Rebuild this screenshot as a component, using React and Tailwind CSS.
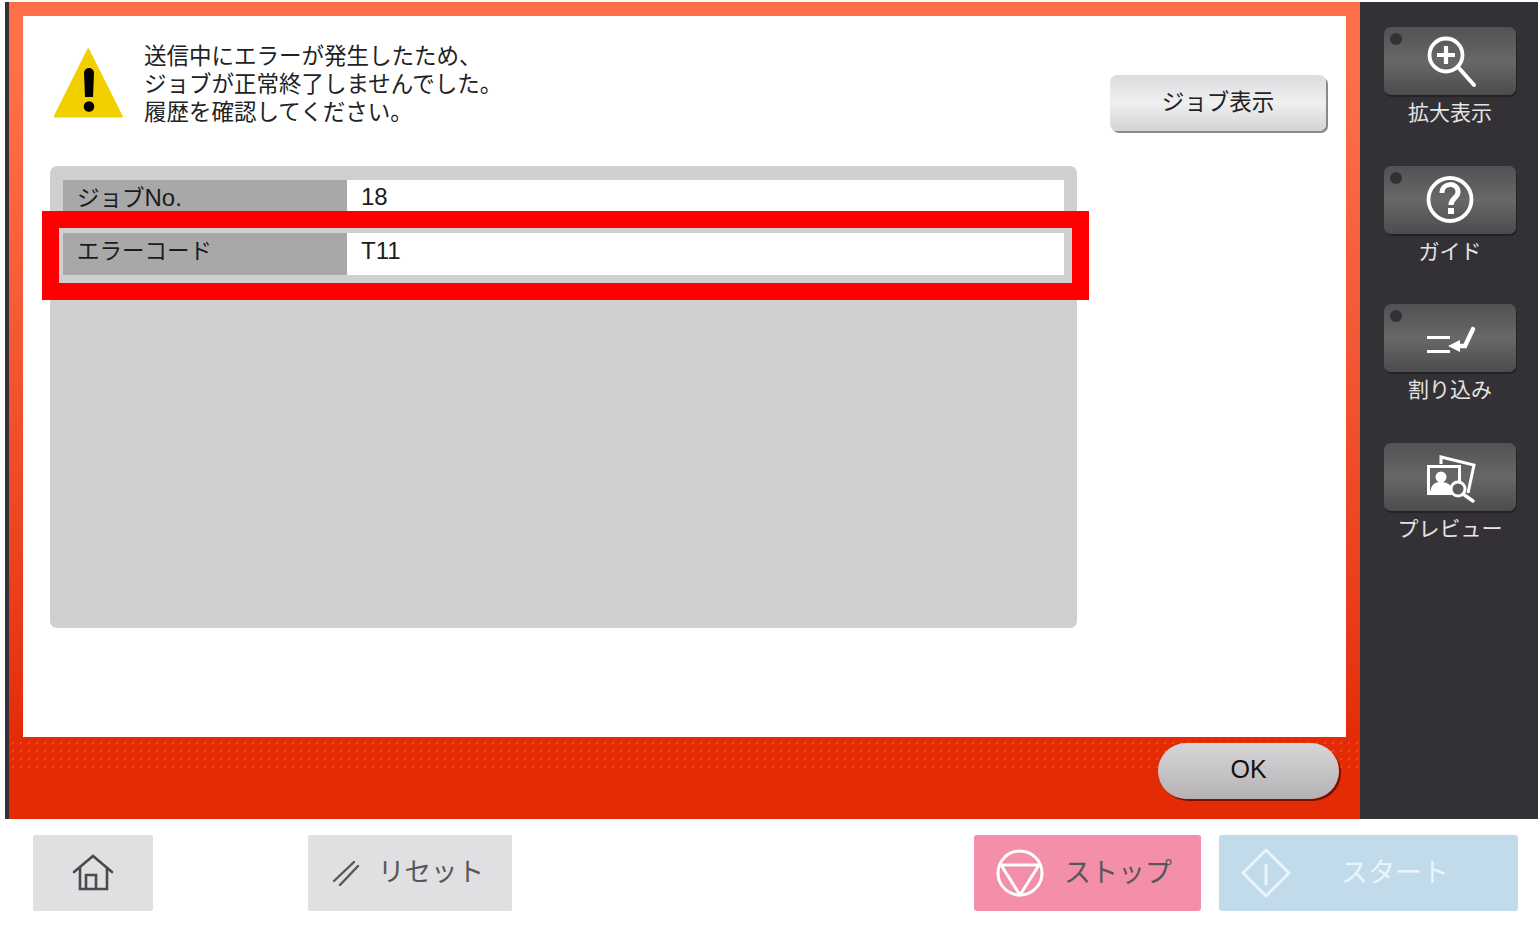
const font = "font-['Liberation_Sans','Noto_Sans_CJK_JP',sans-serif]";

const WarningIcon = () => (
  <svg width="72" height="74" viewBox="0 0 72 74" className="shrink-0">
    <path d="M35.2 2.5 L68.8 69.5 H1.8 Z" fill="#f2d000" stroke="#f2d000" strokeWidth="2" strokeLinejoin="round" />
    <path d="M31 26 a5 5 0 0 1 10 0 L40 50 h-8 Z" fill="#000" />
    <circle cx="36" cy="59.5" r="5.3" fill="#000" />
  </svg>
);

const ZoomIcon = () => (
  <g fill="none" stroke="#fff" strokeWidth="3.8">
    <circle cx="62" cy="28" r="16.5" />
    <path d="M53 28 H71 M62 19 V37" strokeWidth="4.2" />
    <path d="M74 40 L90 58" strokeWidth="4" strokeLinecap="round" />
  </g>
);

const GuideIcon = () => (
  <g>
    <circle cx="66" cy="33.5" r="21.5" fill="none" stroke="#fff" strokeWidth="3.8" />
    <path d="M58 27 c0 -11 16 -11 16 -1 c0 6 -7 6 -7 13" fill="none" stroke="#fff" strokeWidth="5" />
    <rect x="64" y="42" width="6" height="6" fill="#fff" />
  </g>
);

const InterruptIcon = () => (
  <g fill="#fff">
    <rect x="43" y="32" width="23" height="3" />
    <rect x="43" y="46" width="23" height="3" />
    <path d="M64 42 L76 36 V48 Z" />
    <path d="M74 42 H81 L89 25" fill="none" stroke="#fff" strokeWidth="4.4" strokeLinecap="round" />
  </g>
);

const PreviewIcon = () => (
  <g fill="none" stroke="#fff" strokeWidth="3">
    <path d="M57 21 V14 L90 22 L84 50" />
    <rect x="44.5" y="23.5" width="31" height="27" />
    <circle cx="57" cy="34" r="5.5" fill="#fff" stroke="none" />
    <path d="M46 50 C47 41 51 39 57 39 C62 39 66 41 68 45 L68 50 Z" fill="#fff" stroke="none" />
    <circle cx="74" cy="46" r="7" fill="#5c5c5e" />
    <path d="M79 51 L89 58" strokeWidth="3.4" strokeLinecap="round" />
  </g>
);

const sideButtons = [
  { label: '拡大表示', icon: <ZoomIcon />, led: true },
  { label: 'ガイド', icon: <GuideIcon />, led: true },
  { label: '割り込み', icon: <InterruptIcon />, led: true },
  { label: 'プレビュー', icon: <PreviewIcon />, led: false },
];

const SideButton = ({ label, icon, led }) => (
  <div className="flex flex-col items-center h-[138.7px]">
    <div className="relative w-[132px] h-[68px] rounded-[7px] bg-gradient-to-b from-[#525254] via-[#686868] to-[#4c4c4e] shadow-[1px_2px_0_#232225]">
      {led && <span className="absolute left-[6px] top-[6px] w-[12px] h-[12px] rounded-full bg-[#333135]" />}
      <svg width="132" height="68" viewBox="0 0 132 68" className="block">{icon}</svg>
    </div>
    <span className="mt-[3px] text-[21px] leading-[30px] text-[#e4e4e4]">{label}</span>
  </div>
);

const InfoRow = ({ label, value, top }) => (
  <div className="flex h-[42px] text-[#1c1c1c]">
    <div className={`w-[284px] bg-[#a8a8a8] pl-[14px] text-[22.5px] ${top ? 'leading-[35px]' : 'leading-[37px]'}`}>{label}</div>
    <div className={`flex-1 bg-white pl-[14px] text-[24px] ${top ? 'leading-[34px]' : 'leading-[36px]'}`}>{value}</div>
  </div>
);

const App = () => {
  return (
    <div className={`w-[1540px] h-[930px] bg-white overflow-hidden pt-[2px] ${font}`}>
      <div className="flex h-[817px] pl-[5px] pr-[2px]">
        <div className="w-[4px] bg-[#333135]" />

        <div className="relative flex-1 flex flex-col px-[14px] pt-[14px] bg-gradient-to-b from-[#ff7048] from-[8%] to-[#e32b05] to-[91%]">
          <div className="relative z-10 h-[721px] bg-white pl-[27px] pr-[19px] pt-[31px]">
            <div className="flex h-[119px]">
              <div className="w-[75px] ml-[3px]"><WarningIcon /></div>
              <div className="ml-[16px] -mt-[4px] text-[22.5px] leading-[28px] text-[#222]">
                <p>送信中にエラーが発生したため、</p>
                <p>ジョブが正常終了しませんでした。</p>
                <p>履歴を確認してください。</p>
              </div>
              <div className="ml-auto mr-[1px] mt-[28px] w-[216px] h-[56px] rounded-[7px] flex items-center justify-center text-[22.5px] text-[#222] bg-gradient-to-b from-[#dcdcde] via-[#f0f0f2] to-[#d4d4d6] shadow-[2px_2px_0_#8a8a8a]">
                ジョブ表示
              </div>
            </div>

            <div className="relative w-[1027px] h-[462px] rounded-[7px] bg-[#cfcfcf] px-[13px] pt-[14px] flex flex-col gap-[11px]">
              <InfoRow label={<>ジョブ<span className="text-[24px]">No.</span></>} value="18" top />
              <InfoRow label="エラーコード" value="T11" />
              <div className="absolute -left-[8px] top-[45px] w-[1047px] h-[89px] border-[17px] border-[#ff0000]" />
            </div>
          </div>

          <div className="absolute inset-x-0 top-[737px] h-[30px] opacity-60 bg-[radial-gradient(circle,#ff5c12_0.7px,transparent_1.1px)] bg-[length:8px_8px]" />

          <div className="relative flex-1 flex justify-end items-start pt-[6px]">
            <div className="w-[181px] h-[56px] mr-[7px] pb-[2px] rounded-full flex items-center justify-center text-[25px] text-[#111] bg-gradient-to-b from-[#d8d6d8] to-[#b4b2b4] shadow-[2px_2px_0_#7c1000]">
              OK
            </div>
          </div>
        </div>

        <div className="w-[178px] bg-[#333135] pt-[25px] pl-[24px] pr-[22px]">
          {sideButtons.map((b) => (
            <SideButton key={b.label} label={b.label} icon={b.icon} led={b.led} />
          ))}
        </div>
      </div>

      <div className="flex pt-[16px] pl-[33px] pr-[22px]">
        <div className="w-[120px] h-[76px] rounded-[2px] bg-[#e0dfe2]">
          <svg width="120" height="76" viewBox="0 0 120 76" fill="none" stroke="#4a4a4c" strokeWidth="2.6">
            <path d="M41 37 L60 21 L79 37" strokeLinecap="round" />
            <path d="M47 32 V54 H74 V32" />
            <path d="M53 54 V40 H63 V54" />
          </svg>
        </div>

        <div className="ml-[155px] w-[204px] h-[76px] rounded-[2px] bg-[#e0dfe2] flex items-center pl-[24px] text-[26.5px] text-[#57575a]">
          <svg width="28" height="26" viewBox="0 0 28 26" fill="none" stroke="#57575a" strokeWidth="2.4" strokeLinecap="round">
            <path d="M2 21 L22 2" />
            <path d="M8 25 L26 6" />
          </svg>
          <span className="ml-[18px]">リセット</span>
        </div>

        <div className="ml-auto w-[227px] h-[76px] rounded-[3px] bg-[#f48fa9] flex items-center text-[27px] text-[#57575a]">
          <svg width="90" height="76" viewBox="0 0 90 76" fill="none" stroke="#fff" strokeWidth="3" className="shrink-0">
            <circle cx="46" cy="38" r="22" />
            <path d="M27 30 H65 L46 60 Z" strokeLinejoin="round" />
          </svg>
          <span>ストップ</span>
        </div>

        <div className="ml-[18px] w-[299px] h-[76px] rounded-[3px] bg-[#c1dbea] flex items-center text-[27px] text-[#eaf5fb]">
          <svg width="122" height="76" viewBox="0 0 122 76" fill="none" stroke="#eaf5fb" strokeWidth="3" className="shrink-0">
            <path d="M47 15 L70 38 L47 61 L24 38 Z" strokeLinejoin="round" />
            <path d="M47 29 V50" />
          </svg>
          <span>スタート</span>
        </div>
      </div>
    </div>
  );
};

export default App;
